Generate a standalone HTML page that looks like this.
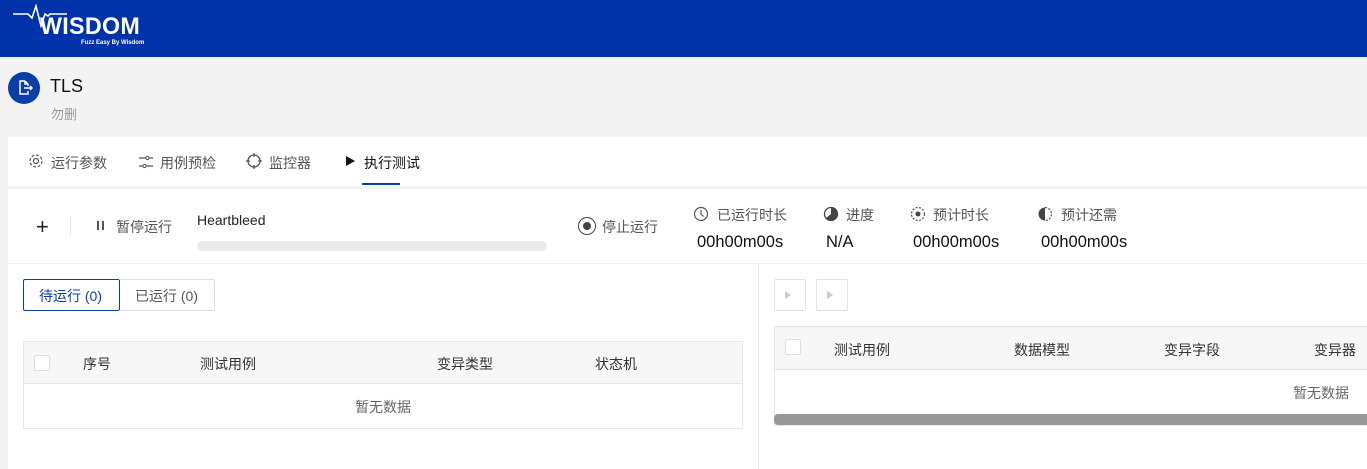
<!DOCTYPE html>
<html><head><meta charset="utf-8"><style>
*{margin:0;padding:0;box-sizing:border-box}
body{width:1367px;height:469px;overflow:hidden;background:#f3f3f3;font-family:"Liberation Sans","Noto Sans CJK SC",sans-serif;position:relative;color:#333}
.a{position:absolute}
.t{font-size:14px;color:#555;white-space:nowrap}
</style></head><body>
<div class="a" style="left:0;top:0;width:1367px;height:57px;background:#0033aa"></div>
<svg class="a" style="left:12px;top:4px" width="60" height="24" viewBox="0 0 60 24"><path d="M1 10H16L20 14L24 2L29 22L33 10L36 12L38 10H55" stroke="#fff" stroke-width="1.6" fill="none"/></svg>
<div class="a" style="left:40px;top:13px;font-size:24px;font-weight:bold;color:#fff;letter-spacing:0.3px;transform:scaleX(0.97);transform-origin:left">WISDOM</div>
<div class="a" style="left:81px;top:40px;font-size:6px;font-weight:bold;color:#fff">Fuzz Easy By Wisdom</div>

<div class="a" style="left:8px;top:72px;width:32px;height:32px;border-radius:50%;background:#0a3ea8"></div>
<svg class="a" style="left:16px;top:79px" width="18" height="18" viewBox="0 0 18 18"><path d="M9 2H4V15H12V12M9 2L12 5V7M9 2V5H12M8 9H16M14 7L16 9L14 11" stroke="#fff" stroke-width="1.5" fill="none"/></svg>
<div class="a" style="left:50px;top:76px;font-size:18px;color:#111">TLS</div>
<div class="a" style="left:51px;top:104px;font-size:13px;color:#999">勿删</div>

<div class="a" style="left:8px;top:137px;width:1359px;height:332px;background:#fff"></div>
<div class="a" style="left:8px;top:186px;width:1359px;height:3px;background:#f2f2f2"></div>
<svg class="a" style="left:28px;top:153px" width="16" height="16" viewBox="0 0 16 16"><circle cx="8" cy="8" r="2.5" stroke="#555" fill="none" stroke-width="1.2"/><circle cx="8" cy="8" r="6" stroke="#555" fill="none" stroke-width="1.2" stroke-dasharray="3 1.7"/></svg>
<div class="a t" style="left:51px;top:153px">运行参数</div>
<svg class="a" style="left:138px;top:154px" width="16" height="16" viewBox="0 0 16 16"><path d="M1 4H8M11 4H15M1 12H5M8 12H15" stroke="#555" stroke-width="1.2"/><circle cx="9.5" cy="4" r="1.6" fill="none" stroke="#555"/><circle cx="6.5" cy="12" r="1.6" fill="none" stroke="#555"/></svg>
<div class="a t" style="left:160px;top:153px">用例预检</div>
<svg class="a" style="left:246px;top:153px" width="16" height="16" viewBox="0 0 16 16"><circle cx="8" cy="8" r="6" stroke="#555" fill="none" stroke-width="1.3"/><path d="M8 0V4M8 12V16M0 8H4M12 8H16" stroke="#555" stroke-width="1.3"/></svg>
<div class="a t" style="left:269px;top:153px">监控器</div>
<div class="a" style="left:346px;top:156px;width:0;height:0;border-left:9px solid #111;border-top:5.5px solid transparent;border-bottom:5.5px solid transparent"></div>
<div class="a t" style="left:364px;top:153px;color:#111">执行测试</div>
<div class="a" style="left:362px;top:183px;width:38px;height:2px;background:#0a3ea8"></div>

<div class="a" style="left:36px;top:214px;font-size:22px;color:#222">+</div>
<div class="a" style="left:70px;top:216px;width:1px;height:20px;background:#e6e6e6"></div>
<div class="a" style="left:97px;top:221px;width:2px;height:9px;background:#555"></div>
<div class="a" style="left:102px;top:221px;width:2px;height:9px;background:#555"></div>
<div class="a t" style="left:116px;top:217px">暂停运行</div>
<div class="a" style="left:197px;top:212px;font-size:14px;color:#222">Heartbleed</div>
<div class="a" style="left:197px;top:241px;width:350px;height:10px;border-radius:5px;background:#ebebeb"></div>
<div class="a" style="left:578px;top:217px;width:18px;height:18px;border-radius:50%;border:1.5px solid #444"></div>
<div class="a" style="left:583px;top:222px;width:8px;height:8px;border-radius:50%;background:#444"></div>
<div class="a t" style="left:602px;top:217px">停止运行</div>

<svg class="a" style="left:693px;top:206px" width="16" height="16" viewBox="0 0 16 16"><circle cx="8" cy="8" r="6.5" fill="none" stroke="#555" stroke-width="1.2"/><path d="M8 4V8L10.5 10.5" stroke="#555" stroke-width="1.2" fill="none"/></svg>
<div class="a t" style="left:717px;top:205px">已运行时长</div>
<div class="a" style="left:697px;top:233px;font-size:16.5px;color:#111">00h00m00s</div>
<svg class="a" style="left:823px;top:206px" width="16" height="16" viewBox="0 0 16 16"><circle cx="8" cy="8" r="6.5" fill="none" stroke="#444" stroke-width="1.3"/><path d="M8 1.5A6.5 6.5 0 1 1 3 12L8 8Z" fill="#444"/></svg>
<div class="a t" style="left:846px;top:205px">进度</div>
<div class="a" style="left:826px;top:233px;font-size:16.5px;color:#111">N/A</div>
<svg class="a" style="left:910px;top:206px" width="16" height="16" viewBox="0 0 16 16"><circle cx="8" cy="8" r="6.5" fill="none" stroke="#555" stroke-width="1.2" stroke-dasharray="2 1.5"/><circle cx="8" cy="8" r="2.5" fill="#444"/></svg>
<div class="a t" style="left:933px;top:205px">预计时长</div>
<div class="a" style="left:913px;top:233px;font-size:16.5px;color:#111">00h00m00s</div>
<svg class="a" style="left:1037px;top:206px" width="16" height="16" viewBox="0 0 16 16"><path d="M8 1.5A6.5 6.5 0 0 0 8 14.5Z" fill="#444"/><path d="M8 1.5A6.5 6.5 0 0 1 8 14.5" fill="none" stroke="#555" stroke-width="1.2" stroke-dasharray="2 1.5"/></svg>
<div class="a t" style="left:1061px;top:205px">预计还需</div>
<div class="a" style="left:1041px;top:233px;font-size:16.5px;color:#111">00h00m00s</div>

<div class="a" style="left:8px;top:263px;width:1359px;height:1px;background:#efefef"></div>
<div class="a" style="left:758px;top:264px;width:1px;height:205px;background:#efefef"></div>

<div class="a" style="left:23px;top:279px;width:97px;height:32px;border:1px solid #0a3ea8;border-radius:2px"></div>
<div class="a t" style="left:39px;top:286px;color:#0a3ea8">待运行 (0)</div>
<div class="a" style="left:119px;top:279px;width:96px;height:32px;border:1px solid #ddd;border-left:none;border-radius:0 2px 2px 0"></div>
<div class="a t" style="left:135px;top:286px">已运行 (0)</div>

<div class="a" style="left:23px;top:341px;width:720px;height:88px;border:1px solid #e6e6e6"></div>
<div class="a" style="left:24px;top:342px;width:718px;height:42px;background:#f7f7f7;border-bottom:1px solid #e6e6e6"></div>
<div class="a" style="left:34px;top:355px;width:16px;height:16px;border:1px solid #ddd;border-radius:2px;background:#fff"></div>
<div class="a t" style="left:83px;top:354px;color:#333">序号</div>
<div class="a t" style="left:200px;top:354px;color:#333">测试用例</div>
<div class="a t" style="left:437px;top:354px;color:#333">变异类型</div>
<div class="a t" style="left:595px;top:354px;color:#333">状态机</div>
<div class="a t" style="left:355px;top:397px;color:#666">暂无数据</div>

<div class="a" style="left:774px;top:279px;width:32px;height:32px;border:1px solid #e2e2e2;border-radius:2px"></div>
<div class="a" style="left:816px;top:279px;width:32px;height:32px;border:1px solid #e2e2e2;border-radius:2px"></div>
<div class="a" style="left:785px;top:291px;border-left:6px solid #ccc;border-top:4px solid transparent;border-bottom:4px solid transparent"></div>
<div class="a" style="left:827px;top:291px;border-left:6px solid #ccc;border-top:4px solid transparent;border-bottom:4px solid transparent"></div>

<div class="a" style="left:774px;top:326px;width:593px;height:100px;border:1px solid #e6e6e6;border-right:none"></div>
<div class="a" style="left:775px;top:327px;width:592px;height:43px;background:#f7f7f7;border-bottom:1px solid #e6e6e6"></div>
<div class="a" style="left:785px;top:339px;width:16px;height:16px;border:1px solid #ddd;border-radius:2px;background:#fff"></div>
<div class="a t" style="left:834px;top:340px;color:#333">测试用例</div>
<div class="a t" style="left:1014px;top:340px;color:#333">数据模型</div>
<div class="a t" style="left:1164px;top:340px;color:#333">变异字段</div>
<div class="a t" style="left:1314px;top:340px;color:#333">变异器</div>
<div class="a t" style="left:1293px;top:383px;color:#666">暂无数据</div>
<div class="a" style="left:774px;top:414px;width:593px;height:11px;background:#999;border-radius:4px 0 0 4px"></div>
</body></html>
